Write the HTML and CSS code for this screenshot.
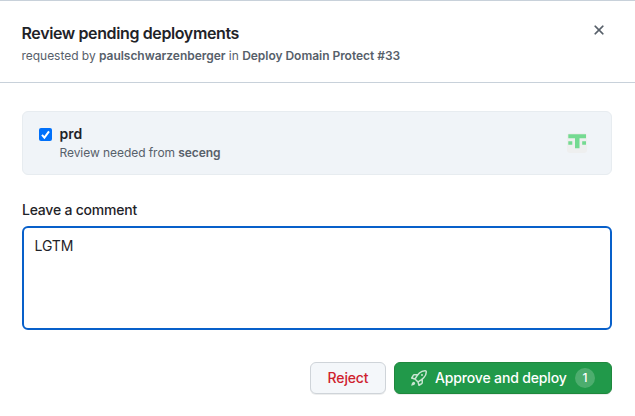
FILE: index.html
```html
<!DOCTYPE html>
<html lang="en">
<head>
<meta charset="utf-8">
<title>Review pending deployments</title>
<link rel="stylesheet" href="styles.css">
</head>
<body>
<section class="dialog" role="dialog" aria-labelledby="title">
  <header class="dialog-header">
    <div>
      <h1 class="title" id="title">Review pending deployments</h1>
      <p class="subtitle">requested by <b>paulschwarzenberger</b> in <b>Deploy Domain Protect #33</b></p>
    </div>
    <button class="close" type="button" aria-label="Close">
      <svg width="16" height="16" viewBox="0 0 16 16" fill="currentColor" stroke="currentColor" stroke-width=".3"><path d="M3.72 3.72a.75.75 0 0 1 1.06 0L8 6.94l3.22-3.22a.75.75 0 1 1 1.06 1.06L9.06 8l3.22 3.22a.75.75 0 1 1-1.06 1.06L8 9.06l-3.22 3.22a.75.75 0 0 1-1.06-1.06L6.94 8 3.72 4.78a.75.75 0 0 1 0-1.06Z"/></svg>
    </button>
  </header>
  <div class="dialog-body">
    <label class="environment">
      <svg class="check" width="13" height="13" viewBox="0 0 13 13"><rect width="13" height="13" rx="2" fill="#0070fa"/><path d="M3 6.9 5.4 9.6 10 3.3" fill="none" stroke="#fff" stroke-width="2"/></svg>
      <span class="environment-text">
        <span class="environment-name">prd</span>
        <span class="environment-note">Review needed from <b>seceng</b></span>
      </span>
      <svg class="avatar" width="20" height="20" viewBox="0 0 20 20"><rect width="20" height="20" rx="3" fill="#eeefef"/><path d="M1.300 1.300h17.700v4h-6.500V15.300h-4.500V5.300H1.300zM1.300 8.300h4v3.500h-4zM15.200 8.300H19v3.500h-3.800z" fill="#74da91"/></svg>
    </label>
    <label class="comment-label" for="comment">Leave a comment</label>
    <textarea class="comment" id="comment" spellcheck="false">LGTM</textarea>
    <footer class="actions">
      <button class="button reject" type="button"><span>Reject</span></button>
      <button class="button approve" type="button">
        <svg class="rocket" width="16" height="16" viewBox="0 0 16 16" fill="currentColor"><path d="M14.064 0h.186C15.216 0 16 .784 16 1.75v.186a8.752 8.752 0 0 1-2.564 6.186l-.458.459c-.314.314-.641.616-.979.904v3.207c0 .608-.315 1.172-.833 1.49l-2.774 1.707a.749.749 0 0 1-1.11-.418l-.954-3.102a1.214 1.214 0 0 1-.145-.125L3.754 9.816a1.218 1.218 0 0 1-.124-.145L.528 8.717a.749.749 0 0 1-.418-1.11l1.71-2.774A1.748 1.748 0 0 1 3.31 4h3.204c.288-.338.59-.665.904-.979l.459-.458A8.749 8.749 0 0 1 14.064 0ZM8.938 3.623h-.002l-.458.458c-.76.76-1.437 1.598-2.02 2.5l-1.5 2.317 2.143 2.143 2.317-1.5c.902-.583 1.74-1.26 2.499-2.02l.459-.458a7.25 7.25 0 0 0 2.123-5.127V1.75a.25.25 0 0 0-.25-.25h-.186a7.249 7.249 0 0 0-5.125 2.123ZM3.56 14.56c-.732.732-2.334 1.045-3.005 1.148a.234.234 0 0 1-.201-.064.234.234 0 0 1-.064-.201c.103-.671.416-2.273 1.15-3.003a1.502 1.502 0 1 1 2.12 2.12Zm6.94-3.935c-.088.06-.177.118-.266.175l-2.35 1.521.548 1.783 1.949-1.2a.25.25 0 0 0 .119-.213ZM3.678 8.116 5.2 5.766c.058-.09.117-.178.176-.266H3.309a.25.25 0 0 0-.213.119l-1.2 1.95ZM12 5a1 1 0 1 1-2 0 1 1 0 0 1 2 0Z"/></svg>
        <span class="approve-text">Approve and deploy</span>
        <span class="counter">1</span>
      </button>
    </footer>
  </div>
</section>
</body>
</html>
```
FILE: styles.css
```css
* { box-sizing: border-box; }
body {
  margin: 0;
  background: #fff;
  color: #1f2328;
  font: 14px/20px Inter, "Liberation Sans", sans-serif;
}
b { font-weight: 600; }
.dialog { height: 416px; border-top: 1px solid #c8d1da; overflow: hidden; }
.dialog-header {
  display: flex;
  justify-content: space-between;
  height: 82px;
  padding: 20px 28px 0 21.5px;
  border-bottom: 1px solid #c8d1da;
}
.title { margin: 0; font-size: 16px; line-height: 24px; font-weight: 600; letter-spacing: -0.38px; }
.subtitle { margin: 2px 0 0; font-size: 12px; line-height: 18px; color: #57606a; letter-spacing: -0.03px; white-space: nowrap; }
.close { display: flex; width: 16px; height: 16px; margin-top: 1px; padding: 0; border: 0; background: none; color: #57606a; }
.dialog-body { padding: 28px 23px 0 22px; }
.environment {
  display: flex;
  height: 64px;
  padding: 12px 24px 0 16px;
  border: 1px solid #e7ecf0;
  border-radius: 6px;
  background: #f0f4f8;
}
.check { margin-top: 4px; }
.environment-text { display: flex; flex: 1; flex-direction: column; margin-left: 7.5px; }
.environment-name { font-weight: 600; line-height: 20px; }
.environment-note { font-size: 12px; line-height: 18px; color: #57606a; letter-spacing: -0.06px; }
.avatar { margin-top: 9px; }
.comment-label { display: block; margin-top: 25px; font-weight: 550; letter-spacing: -0.22px; }
.comment {
  display: block;
  width: 100%;
  height: 104px;
  margin-top: 6px;
  padding: 8px 10.5px;
  border: 2px solid #0860ca;
  border-radius: 6px;
  outline: 0;
  resize: none;
  background: #fff;
  color: #1f2328;
  font: inherit;
  letter-spacing: -0.1px;
}
.actions { display: flex; justify-content: flex-end; gap: 8px; margin-top: 32px; }
.button {
  display: flex;
  align-items: center;
  height: 32px;
  padding: 0 16px;
  border: 1px solid #cfd4d9;
  border-radius: 6px;
  font: 550 14px/20px Inter, "Liberation Sans", sans-serif;
  letter-spacing: -0.15px;
  box-shadow: 0 1px 0 rgba(31, 35, 40, 0.08);
}
.reject { justify-content: center; width: 76px; background: #f4f7fa; color: #cf222e; }
.approve { width: 218px; border-color: #1f883d; background: #21994a; color: #fff; }
.rocket { flex: none; margin-right: 8px; opacity: 0.75; }
.approve-text { white-space: nowrap; }
.counter {
  width: 20px;
  height: 20px;
  margin-left: auto;
  border-radius: 10px;
  background: rgba(255, 255, 255, 0.2);
  font-size: 12px;
  text-align: center;
}
```
